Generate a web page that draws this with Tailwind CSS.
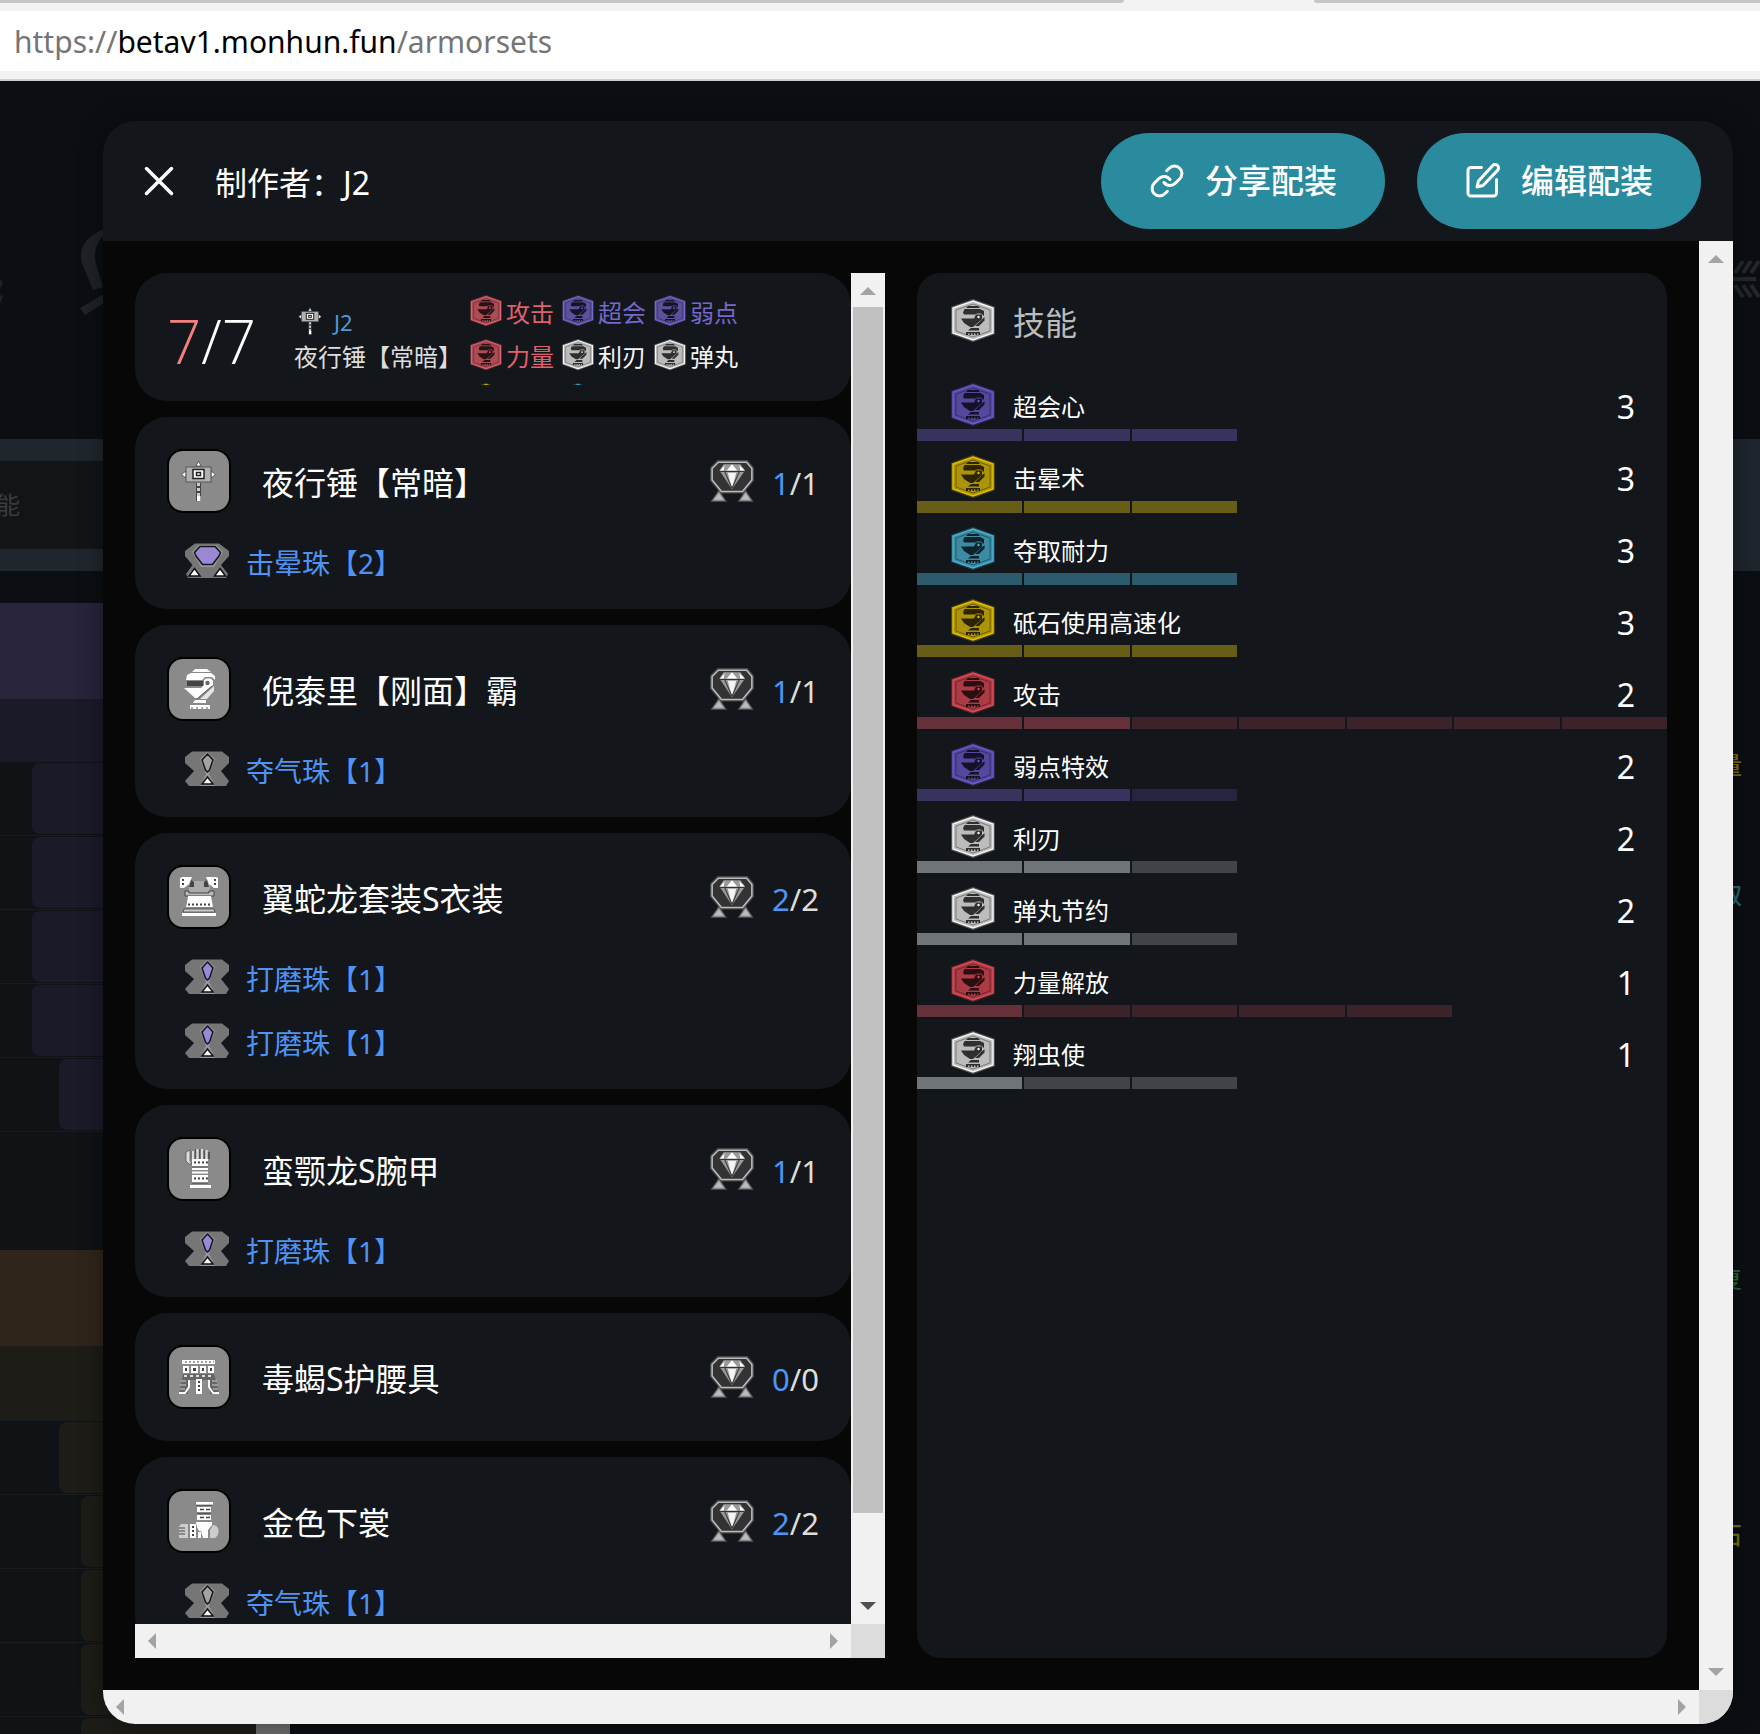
<!DOCTYPE html>
<html lang="zh-CN">

<head>
    <meta charset="UTF-8">
    <meta name="viewport" content="width=device-width, initial-scale=1.0">
    <title>armorsets</title>
    <script src="https://cdn.jsdelivr.net/npm/@tailwindcss/browser@4"></script>
</head>

<body class="bg-[#0b0f13] font-['Noto_Sans','Noto_Sans_CJK_SC',sans-serif] text-white">

    <!-- icons -->
    <svg class="hidden">
        <symbol id="skill" viewBox="0 0 44 44">
            <polygon points="22,1 43,8.500 43,34.500 22,42 1,34.500 1,8.500" fill="currentColor" opacity=".25" stroke="currentColor" stroke-width="2" stroke-linejoin="round" />
            <polygon points="22,2 42,9 42,34 22,41 2,34 2,9" fill="#111" />
            <polygon points="22,2 42,9 42,34 22,41 2,34 2,9" fill="currentColor" fill-opacity=".75" stroke="currentColor" stroke-width="1.500" />
            <polygon points="22,5 39,11 39,32 22,38 5,32 5,11" fill="none" stroke="#000" stroke-opacity=".35" stroke-width="1" />
            <g fill="#000" fill-opacity=".75">
                <path d="M15 9L17 7H27L29 9Z M12 13.500L13.500 10H29L33 12V17L30 14.500H26L24 15.500H13Z" />
                <path d="M10 19.500H23L25 15.500H31V20L22 28H19L13 24Z" />
                <path d="M33.500 18V21.500L28 27H24Z" />
                <path d="M20 29H28V31.500H17Z M15 33H29V36H27.500V34.500H26V36H24.500V34.500H23V36H21.500V34.500H20V36H18.500V34.500H17V36H15Z" />
            </g>
            <circle cx="27.500" cy="18" r="1.200" fill="currentColor" />
        </symbol>

        <symbol id="slot" viewBox="0 0 44 42">
            <polygon points="9,3 36,3 41,9 41,20 32,31 12,31 3,20 3,9" fill="#333" stroke="#777" stroke-width="4" stroke-opacity=".5" />
            <polygon points="9,3 36,3 41,9 41,20 32,31 12,31 3,20 3,9" fill="#333" stroke="#bbb" stroke-width="1.500" />
            <polygon points="14,5 30,5 34.500,11 22,29 10,11" fill="#999" />
            <path d="M22 5L27 11H17Z M15 6L14 11H10.500Z M29 6L30 11H34Z" fill="#fff" />
            <path d="M18 13H26L22 29Z" fill="#f4f4f4" />
            <path d="M10 12H34 M15 12L22 28 29 12" stroke="#333" stroke-width="1" fill="none" />
            <path d="M9.500 31L15.500 40H3Z M35 31L41 40H29Z" fill="#bbb" stroke="#777" stroke-opacity=".5" stroke-width="2" />
        </symbol>

        <symbol id="deco1" viewBox="0 0 44 36">
            <path d="M7 .5H37L44 6V12L36 20 44 30 41 35H4L0 30 9 20 0 12V6Z" fill="#767676" />
            <path d="M22 1L30 8 24 23 30 35H15L21 23 15 8Z" fill="#999" />
            <polygon points="22.500,3 28,9 24.500,19 22.500,21 20.500,19 17,9" fill="currentColor" stroke="#15151c" stroke-width="1.500" />
            <path d="M22.500 26L28 33H17Z" fill="#fff" stroke="#111" stroke-width="1.500" />
        </symbol>

        <symbol id="deco2" viewBox="0 0 44 36">
            <path d="M10 .5H34L44 8V13L36 22 43 31 41 35H3L1 31 7.500 22 0 13V8Z" fill="#767676" />
            <path d="M14 2H31L38 9 29 24H16L7 9Z" fill="#999" />
            <polygon points="15,3.500 30,3.500 35.500,9.500 34,13 27.500,21.500 17.500,21.500 11,13 9.500,9.500" fill="currentColor" stroke="#15151c" stroke-width="1.500" />
            <path d="M9.500 25.500L15 33H4Z M35 25.500L40.500 33H29.500Z" fill="#fff" stroke="#111" stroke-width="1.500" />
        </symbol>

        <symbol id="hammer" viewBox="0 0 64 64">
            <path d="M31.500 12L34 17H29Z M14.500 25.500L19 22V29Z M48.500 25.500L44 22V29Z" fill="#fff" stroke="#444" stroke-width=".8" />
            <rect x="19" y="18" width="25" height="15" fill="#b0b0b0" stroke="#555" />
            <rect x="26" y="20.500" width="11" height="9" fill="#fff" stroke="#222" stroke-width="1.500" />
            <rect x="29.500" y="23.500" width="4" height="3" fill="#fff" stroke="#222" stroke-width="1.500" />
            <path d="M31.500 34V52" stroke="#444" stroke-width="5" />
            <path d="M31.500 34V47" stroke="#ccc" stroke-width="3" stroke-dasharray="3 2" />
            <rect x="30" y="47" width="3.500" height="5" fill="#fff" />
        </symbol>

        <symbol id="helm" viewBox="0 0 64 64">
            <path d="M25 15L28 12H40L44 15Z M19 23L20 18L24 16H44L48 19V23L45 20H38L35 23Z" fill="#fff" />
            <path d="M20 24H36V29H20Z" fill="#444" />
            <path d="M17 31H34L37 28L37 23L39 21.500H44L46 24V28L31 41H28Z" fill="#fff" />
            <circle cx="40.500" cy="26" r="2.200" fill="#666" />
            <path d="M47 29V34L40 42H33Z" fill="#e4e4e4" />
            <path d="M45 29L30 42" stroke="#555" />
            <path d="M28 43H39V46H26Z M23 48H43V52H23Z" fill="#fff" />
            <path d="M24 51H43" stroke="#555" stroke-dasharray="2 3" />
        </symbol>

        <symbol id="chest" viewBox="0 0 64 64">
            <path d="M22 16H43V30H22Z" fill="#aaa" />
            <path d="M24 15L27 17V22H22Z M40 15L37 17V22H42Z" fill="#444" />
            <path d="M13 13L15 12H25L22 19L17 23H13Z M51 13L49 12H39L42 19L47 23H51Z" fill="#fff" />
            <path d="M16 14V21 M48 14V21" stroke="#444" stroke-width="2" stroke-dasharray="2 2" />
            <path d="M18 26H22V28H42V26H47V31H18Z" fill="#bbb" stroke="#444" />
            <path d="M21 31H44L46 42H19L20 38Z" fill="#fff" />
            <path d="M21 39.500H44" stroke="#444" stroke-width="2" stroke-dasharray="2 2" />
            <path d="M17 44H47L48 47H16Z" fill="#ccc" stroke="#444" stroke-width=".8" />
            <path d="M15 48H49V51H15Z" fill="#fff" />
        </symbol>

        <symbol id="arm" viewBox="0 0 64 64">
            <path d="M19 15L23 13V24L25 27H22L19 24Z" fill="#ddd" stroke="#555" stroke-width=".8" />
            <path d="M26 14V22 M30 12V22 M34 12V22 M38 13V22 M41 15V22" stroke="#555" stroke-width="4" />
            <path d="M26 14V22 M30.500 12V22 M35 12V22 M39.500 13V22" stroke="#ddd" stroke-width="2.500" />
            <path d="M25 22H41V29H25Z M25 31H41V33H25Z M25 34.500H41V36.500H25Z M25 38H41V45H25Z M23 48H44V51H23Z" fill="#fff" />
            <path d="M27 25.500H41 M27 41.500H41" stroke="#444" stroke-width="2" stroke-dasharray="2 2" />
            <path d="M25 30H41 M25 46.500H41" stroke="#666" />
        </symbol>

        <symbol id="waist" viewBox="0 0 64 64">
            <path d="M15 15H48V19H15Z M16 21H22V28H16Z M24 21H31V28H24Z M33 21H39V28H33Z M41 21H47V28H41Z" fill="#fff" />
            <path d="M18 17H47" stroke="#444" stroke-dasharray="2 2" />
            <path d="M18 23H20V26H18Z M26 23H29V26H26Z M35 23H37V26H35Z M43 23H45V26H43Z" fill="#444" />
            <path d="M16 29H47L50 38 52 49H43V35H21V49H12L14 38Z" fill="#666" />
            <path d="M17 31H46" stroke="#ddd" stroke-width="2" stroke-dasharray="3 3" />
            <path d="M22 35V42L18 48H12 M42 35V42L46 48H52" fill="none" stroke="#fff" stroke-width="1.800" />
            <path d="M13 40H19 M14 36H19 M13 44H18 M51 40H45 M50 36H45 M51 44H46" stroke="#ccc" stroke-width="1.200" />
            <path d="M29 34H35V49H29Z" fill="#fff" />
            <path d="M32 36V46" stroke="#444" stroke-width="2" stroke-dasharray="2 2" />
        </symbol>

        <symbol id="leg" viewBox="0 0 64 64">
            <path d="M29 13H46V15.500H29Z M30 18H44V23H30Z M30 26H44V31H30Z M29 33H45V36L41 41V49H36L34 42H32L30 38Z" fill="#fff" />
            <path d="M33 20.500H43 M33 28.500H43" stroke="#444" stroke-width="1.500" stroke-dasharray="4 2" />
            <path d="M29 16.500H45 M30 24.500H44" stroke="#555" />
            <path d="M14 35H21V49H12V38Z" fill="#ccc" />
            <path d="M12 39H18 M12 42H18 M12 45H18" stroke="#444" />
            <path d="M23 35H29V49H23Z M31 43H34V49H31Z" fill="#fff" />
            <path d="M26 37V47" stroke="#444" stroke-width="2" stroke-dasharray="2 2" />
            <path d="M46 36C53 36 53 46 48 49H43V41Z" fill="#ccc" />
        </symbol>
    </svg>

    <div class="flex h-screen flex-col overflow-hidden">

        <!-- browser bar -->
        <header class="shrink-0 border-b-2 border-[#ccd0d0] bg-[#f3f3f3]">
            <div class="flex h-[3px] justify-between">
                <div class="w-[1124px] rounded-br-md bg-[#c6c6c6]"></div>
                <div class="w-[446px] rounded-bl-md bg-[#c6c6c6]"></div>
            </div>
            <div class="mt-2 mb-2 flex h-[60px] items-center bg-white pl-3.5 text-[30px] text-[#757575]">
                <span>https://<span class="text-black">betav1.monhun.fun</span>/armorsets</span>
            </div>
        </header>

        <main class="relative flex min-h-0 flex-1 flex-col pt-10 pr-[27px] pb-2.5 pl-[103px]">

            <!-- dimmed page behind the dialog -->
            <div class="absolute inset-0 overflow-hidden" aria-hidden="true">
                <svg class="absolute top-[148px] left-0 h-[90px] w-[104px]" viewBox="0 0 104 90" fill="#1f2326">
                    <path d="M104 0C86 7 78 20 82 34L93 61 103 58 96 35C93 22 97 13 104 6Z M104 65L80 79 85 86 104 74Z M0 50L3 54 0 60Z M0 66L3 67 0 75Z" />
                </svg>
                <svg class="absolute top-[178px] right-0 h-10 w-7" viewBox="0 0 28 40" stroke="#24282b" stroke-width="4" fill="none">
                    <path d="M0 20H24 M3 14L11 2 M11 14L19 2 M19 14L27 2 M3 26L11 38 M11 26L19 38 M19 26L27 38" />
                </svg>

                <div class="mt-[358px] flex h-[132px] justify-between">
                    <div class="flex w-[104px] items-center border-y-[22px] border-[#1f262d] bg-[#111518] text-2xl text-[#3a3d40]"><span class="-ml-1">能</span></div>
                    <div class="w-7 bg-[#1f262d]"></div>
                </div>

                <div class="mt-8 flex justify-between">
                    <div class="w-64 bg-[#0f1316]">
                        <div class="h-24 bg-[#27243b]"></div>
                        <div class="h-[62px] bg-[#1a1b29]"></div>
                        <div id="purple_rows"></div>
                        <div class="mt-[45px] h-24 bg-[#2f251a]"></div>
                        <div class="h-[74px] bg-[#1e1c17]"></div>
                        <div id="brown_rows"></div>
                    </div>
                    <div class="flex w-12 flex-col pr-[18px] pt-[144px] text-right text-2xl leading-9 font-medium">
                        <span class="text-[#7d6d0c]">量</span>
                        <span class="mt-[94px] text-[#2b6578]">取</span>
                        <span class="mt-[348px] text-[#286238]">复</span>
                        <span class="mt-[220px] text-[#7d6d0c]">石</span>
                    </div>
                </div>
                <div class="absolute bottom-0 left-64 h-3 w-[34px] bg-[#6b6b6b]"></div>
            </div>

            <!-- dialog -->
            <div role="dialog" class="relative flex min-h-0 flex-1 flex-col overflow-hidden rounded-[32px] bg-[#070707] shadow-[0_0_24px_rgba(0,0,0,0.4)]">

                <div class="flex h-[120px] shrink-0 items-center gap-8 bg-[#13171b] px-8">
                    <button type="button" aria-label="关闭" class="flex size-12 items-center justify-center">
                        <svg class="size-8" viewBox="0 0 32 32" stroke="currentColor" stroke-width="3.500" stroke-linecap="round"><path d="M3.500 3.500L28.500 28.500M28.500 3.500L3.500 28.500" /></svg>
                    </button>
                    <h1 class="mr-auto pt-1 text-[32px]">制作者：J2</h1>
                    <button type="button" class="flex h-24 items-center gap-5 rounded-full bg-[#2a8b9f] px-12 text-[33px] font-medium">
                        <svg class="size-9" viewBox="0 0 24 24" fill="none" stroke="currentColor" stroke-width="2" stroke-linecap="round" stroke-linejoin="round">
                            <path d="M10 13a5 5 0 0 0 7.540.540l3-3a5 5 0 0 0-7.070-7.070l-1.720 1.710" />
                            <path d="M14 11a5 5 0 0 0-7.540-.540l-3 3a5 5 0 0 0 7.070 7.070l1.710-1.710" />
                        </svg>
                        分享配装
                    </button>
                    <button type="button" class="flex h-24 items-center gap-5 rounded-full bg-[#2a8b9f] px-12 text-[33px] font-medium">
                        <svg class="size-9" viewBox="0 0 24 24" fill="none" stroke="currentColor" stroke-width="2" stroke-linecap="round" stroke-linejoin="round">
                            <path d="M11 3H4a2 2 0 0 0-2 2v15a2 2 0 0 0 2 2h15a2 2 0 0 0 2-2v-9" />
                            <path d="M18.500 1.700a2.100 2.100 0 0 1 3.200 3.200L12 15l-4 1 1-4z" />
                        </svg>
                        编辑配装
                    </button>
                </div>

                <div class="flex min-h-0 flex-1">
                    <div class="grid min-w-0 flex-1 grid-cols-2 grid-rows-[minmax(0,1fr)] gap-8 p-8">

                        <!-- equipment column -->
                        <div class="flex min-h-0 flex-col">
                            <div class="flex min-h-0 flex-1">
                                <div class="min-w-0 flex-1 overflow-hidden">

                                    <div class="flex h-32 items-center rounded-[32px] bg-[#13171b] pl-8">
                                        <div class="w-[127px] shrink-0 pt-2 font-['Open_Sans'] text-[60px] leading-none font-light"><span class="text-[#f57f7f]">7</span>/7</div>
                                        <div class="w-[176px] shrink-0 pt-1 text-2xl text-[#ddd]">
                                            <div class="flex h-9 items-center gap-3 pl-1">
                                                <svg class="h-7 w-6" viewBox="14 11 35 42"><use href="#hammer" width="64" height="64" /></svg>
                                                <span class="pt-1 text-[22px] text-[#4f9bd8]">J2</span>
                                            </div>
                                            <div class="leading-9 whitespace-nowrap">夜行锤【常暗】</div>
                                        </div>
                                        <ul id="tags" class="flex h-24 w-[276px] flex-wrap content-start overflow-hidden text-2xl"></ul>
                                    </div>

                                    <div id="cards"></div>
                                </div>

                                <div class="flex w-[34px] shrink-0 flex-col bg-[#f1f1f1]">
                                    <svg class="size-[34px]" viewBox="0 0 34 34" fill="#a3a3a3"><path d="M17 14L25 22H9Z" /></svg>
                                    <div class="flex-1 px-0.5"><div class="h-[94%] bg-[#c1c1c1]"></div></div>
                                    <svg class="size-[34px]" viewBox="0 0 34 34" fill="#505050"><path d="M17 20L25 12H9Z" /></svg>
                                </div>
                            </div>
                            <div class="flex h-[34px] shrink-0 bg-[#f1f1f1]">
                                <svg class="size-[34px]" viewBox="0 0 34 34" fill="#a3a3a3"><path d="M13 17L21 9V25Z" /></svg>
                                <div class="flex-1"></div>
                                <svg class="size-[34px]" viewBox="0 0 34 34" fill="#a3a3a3"><path d="M21 17L13 9V25Z" /></svg>
                                <div class="size-[34px] bg-[#dcdcdc]"></div>
                            </div>
                        </div>

                        <!-- skill column -->
                        <div class="overflow-hidden rounded-3xl bg-[#13171b]">
                            <div class="flex h-24 items-center gap-[18px] pl-[34px]">
                                <svg class="size-11 text-[#f5f5f5]"><use href="#skill" /></svg>
                                <h2 class="pt-1 text-[32px] text-[#bbb]">技能</h2>
                            </div>
                            <ul id="skills"></ul>
                        </div>
                    </div>

                    <div class="flex w-[34px] shrink-0 flex-col justify-between bg-[#f1f1f1]">
                        <svg class="size-[34px]" viewBox="0 0 34 34" fill="#a3a3a3"><path d="M17 14L25 22H9Z" /></svg>
                        <svg class="size-[34px]" viewBox="0 0 34 34" fill="#a3a3a3"><path d="M17 20L25 12H9Z" /></svg>
                    </div>
                </div>

                <div class="flex h-[34px] shrink-0 bg-[#f1f1f1]">
                    <svg class="size-[34px]" viewBox="0 0 34 34" fill="#a3a3a3"><path d="M13 17L21 9V25Z" /></svg>
                    <div class="flex-1"></div>
                    <svg class="size-[34px]" viewBox="0 0 34 34" fill="#a3a3a3"><path d="M21 17L13 9V25Z" /></svg>
                    <div class="size-[34px] bg-[#dcdcdc]"></div>
                </div>
            </div>
        </main>
    </div>

    <script>
        var colors = {
            purple: { icon: "text-[#6a5acd]", on: "bg-[#37335f]", off: "bg-[#252541]" },
            yellow: { icon: "text-[#e2c000]", on: "bg-[#675d15]", off: "bg-[#3d3918]" },
            teal: { icon: "text-[#48b4d4]", on: "bg-[#2c5b6d]", off: "bg-[#203944]" },
            red: { icon: "text-[#e04a56]", on: "bg-[#66303a]", off: "bg-[#3c2229]" },
            white: { icon: "text-[#f5f5f5]", on: "bg-[#6f7477]", off: "bg-[#404447]" }
        };

        // name, color, level, max level
        var skills = [
            ["超会心", "purple", 3, 3],
            ["击晕术", "yellow", 3, 3],
            ["夺取耐力", "teal", 3, 3],
            ["砥石使用高速化", "yellow", 3, 3],
            ["攻击", "red", 2, 7],
            ["弱点特效", "purple", 2, 3],
            ["利刃", "white", 2, 3],
            ["弹丸节约", "white", 2, 3],
            ["力量解放", "red", 1, 5],
            ["翔虫使", "white", 1, 3]
        ];

        var html = "";
        skills.forEach(function (s) {
            var c = colors[s[1]];
            html += '<li class="pt-3">';
            html += '<div class="flex h-12 items-center gap-[18px] pr-8 pl-[34px]">';
            html += '<svg class="size-11 ' + c.icon + '"><use href="#skill" /></svg>';
            html += '<span class="flex-1 pt-1 text-2xl">' + s[0] + '</span>';
            html += '<span class="pt-1 text-[32px]">' + s[2] + '</span>';
            html += '</div>';
            html += '<div class="grid grid-cols-7 gap-0.5">';
            for (var i = 0; i < s[3]; i++) {
                html += '<div class="h-3 ' + (i < s[2] ? c.on : c.off) + '"></div>';
            }
            html += '</div></li>';
        });
        document.getElementById("skills").innerHTML = html;

        var tags = [
            ["攻击", "text-[#e0606c]"],
            ["超会", "text-[#7468cc]"],
            ["弱点", "text-[#7468cc]"],
            ["力量", "text-[#e0606c]"],
            ["利刃", "text-[#f5f5f5]"],
            ["弹丸", "text-[#f5f5f5]"],
            ["", "text-[#e2c000]"],
            ["", "text-[#48b4d4]"]
        ];

        html = "";
        tags.forEach(function (t) {
            html += '<li class="flex h-11 w-[92px] items-center gap-1 ' + t[1] + '">';
            html += '<svg class="size-8 shrink-0"><use href="#skill" /></svg><span class="pt-1">' + t[0] + '</span></li>';
        });
        document.getElementById("tags").innerHTML = html;

        // name, icon, slots, decorations (text, icon, color)
        var cards = [
            ["夜行锤【常暗】", "hammer", 1, [["击晕珠【2】", "deco2", "text-[#9b87d4]"]]],
            ["倪泰里【刚面】霸", "helm", 1, [["夺气珠【1】", "deco1", "text-[#a3a3a3]"]]],
            ["翼蛇龙套装S衣装", "chest", 2, [["打磨珠【1】", "deco1", "text-[#9b87d4]"], ["打磨珠【1】", "deco1", "text-[#9b87d4]"]]],
            ["蛮颚龙S腕甲", "arm", 1, [["打磨珠【1】", "deco1", "text-[#9b87d4]"]]],
            ["毒蝎S护腰具", "waist", 0, []],
            ["金色下裳", "leg", 2, [["夺气珠【1】", "deco1", "text-[#a3a3a3]"]]]
        ];

        html = "";
        cards.forEach(function (c) {
            html += '<div class="mt-4 rounded-[32px] bg-[#13171b] pb-4">';
            html += '<div class="flex h-28 items-center px-8 pt-4">';
            html += '<svg class="size-16 rounded-2xl border-2 border-black bg-[#8a8a8a]" viewBox="2 2 60 60"><use href="#' + c[1] + '" width="64" height="64" /></svg>';
            html += '<h3 class="ml-[31px] flex-1 pt-1 text-[32px]">' + c[0] + '</h3>';
            html += '<svg class="mr-4 h-11 w-[46px]"><use href="#slot" /></svg>';
            html += '<span class="w-12 pt-1 text-right text-[31px] text-[#ddd]"><span class="text-[#4f94f5]">' + c[2] + '</span>/' + c[2] + '</span>';
            html += '</div>';
            c[3].forEach(function (d) {
                html += '<div class="flex h-16 items-center gap-[17px] pl-[50px]">';
                html += '<svg class="h-9 w-11 ' + d[2] + '"><use href="#' + d[1] + '" /></svg>';
                html += '<a href="#" class="pt-1 text-[28px] text-[#4f94f5]">' + d[0] + '</a>';
                html += '</div>';
            });
            html += '</div>';
        });
        document.getElementById("cards").innerHTML = html;

        function bgRows(id, bars) {
            var rows = "";
            bars.forEach(function (cls) {
                rows += '<div class="h-[74px] border-t border-[#191d20] pt-px"><div class="h-[71px] rounded-l-lg ' + cls + '"></div></div>';
            });
            document.getElementById(id).innerHTML = rows;
        }
        bgRows("purple_rows", ["ml-8 bg-[#1a1b29]", "ml-8 bg-[#1a1b29]", "ml-8 bg-[#1a1b29]", "ml-8 bg-[#1a1b29]", "ml-[59px] bg-[#1a1b29]", ""]);
        bgRows("brown_rows", ["ml-[59px] bg-[#1e1c17]", "ml-[81px] bg-[#1e1c17]", "ml-[81px] bg-[#1e1c17]", "ml-[81px] bg-[#1e1c17]", "ml-[81px] bg-[#1e1c17]"]);
    </script>

</body>

</html>
